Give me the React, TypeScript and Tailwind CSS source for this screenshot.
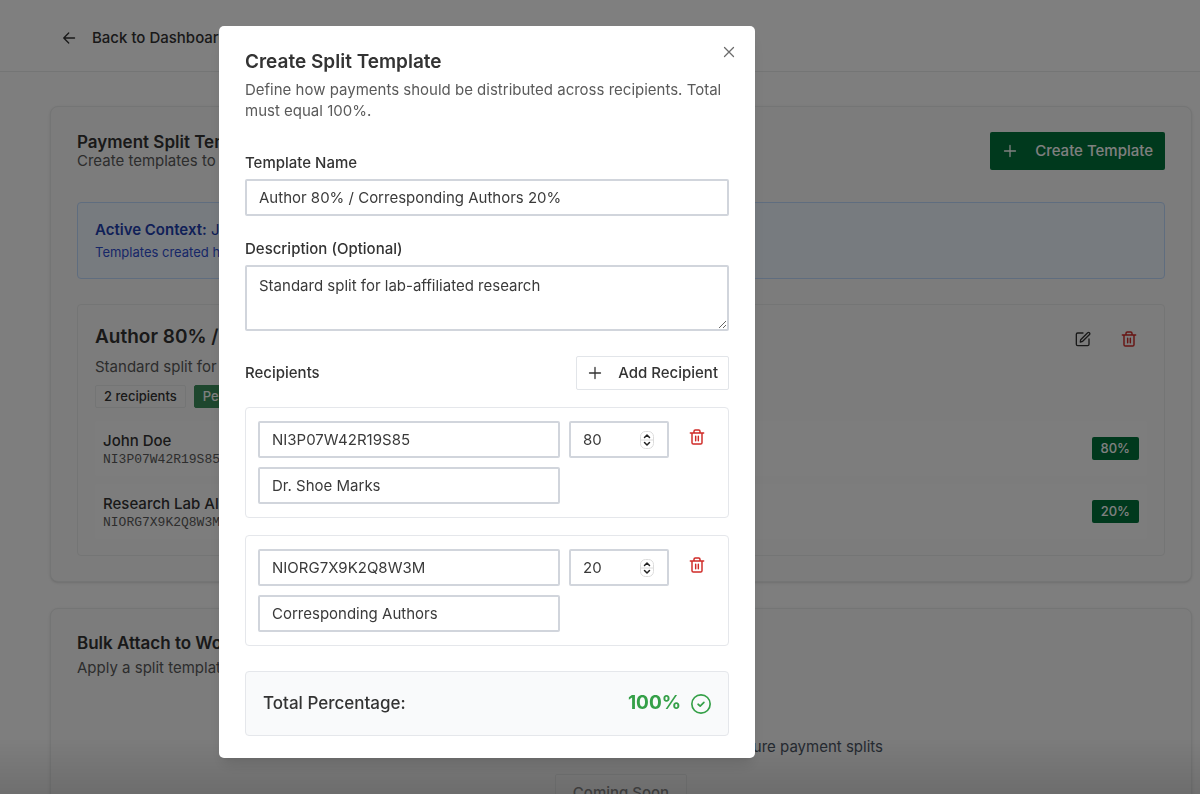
import { useState } from 'react';

interface Recipient {
  id: string;
  name: string;
  percentage: number;
}

interface IconProps {
  className?: string;
}

const inputClass =
  'w-full h-[37px] rounded-xs border-2 border-[#d1d5dc] bg-white px-3 text-[15px] text-[#3a3a3a] outline-none';

function PlusIcon({ className }: IconProps) {
  return (
    <svg viewBox="0 0 16 16" fill="none" stroke="currentColor" strokeWidth="1.3" strokeLinecap="round" className={className}>
      <path d="M2.500 8h11M8 2.500v11" />
    </svg>
  );
}

function ArrowLeftIcon({ className }: IconProps) {
  return (
    <svg viewBox="0 0 24 24" fill="none" stroke="currentColor" strokeWidth="2.300" strokeLinecap="round" strokeLinejoin="round" className={className}>
      <path d="M21.500 12H3M11.500 3.500 3 12l8.500 8.500" />
    </svg>
  );
}

function TrashIcon({ className }: IconProps) {
  return (
    <svg viewBox="0 0 24 24" fill="none" stroke="currentColor" strokeWidth="2.200" strokeLinecap="round" strokeLinejoin="round" className={className}>
      <path d="M2 6h20M4.500 6v14.500a2 2 0 0 0 2 2h11a2 2 0 0 0 2-2V6M7.500 6V3.500a2 2 0 0 1 2-2h5a2 2 0 0 1 2 2V6M10 11v6.500M14 11v6.500" />
    </svg>
  );
}

function EditIcon({ className }: IconProps) {
  return (
    <svg viewBox="0 0 24 24" fill="none" stroke="currentColor" strokeWidth="2" strokeLinecap="round" strokeLinejoin="round" className={className}>
      <path d="M12 3H4a2 2 0 0 0-2 2v15a2 2 0 0 0 2 2h15a2 2 0 0 0 2-2v-8" />
      <path d="M8.500 13 19 2.500a2 2 0 0 1 2.800 2.800L11.500 15.500 8 16.500z" />
    </svg>
  );
}

function CheckCircleIcon({ className }: IconProps) {
  return (
    <svg viewBox="0 0 24 24" fill="none" stroke="currentColor" strokeWidth="2" strokeLinecap="round" strokeLinejoin="round" className={className}>
      <circle cx="12" cy="12" r="11" />
      <path d="m8.500 12.300 2.500 2.200 4.500-4.500" />
    </svg>
  );
}

function CloseIcon({ className }: IconProps) {
  return (
    <svg viewBox="0 0 24 24" fill="none" stroke="currentColor" strokeWidth="2.500" strokeLinecap="round" className={className}>
      <path d="M3 3l18 18M21 3 3 21" />
    </svg>
  );
}

function StepperIcon({ className }: IconProps) {
  return (
    <svg viewBox="0 0 14 18" fill="none" className={className}>
      <rect x="0.500" y="0.500" width="13" height="17" rx="5" fill="#fff" stroke="#dcdcdc" />
      <path d="M1 9h12" stroke="#dcdcdc" />
      <path d="m4.500 6.500 2.500-2.500 2.500 2.500M4.500 11.500 7 14l2.500-2.500" stroke="#222" strokeWidth="1.500" strokeLinecap="round" strokeLinejoin="round" />
    </svg>
  );
}

function SavedRecipient({ name, id, percentage }: Recipient) {
  return (
    <div className="flex items-center justify-between rounded-sm bg-[#fbfbfb] px-2 h-[55px]">
      <div className="pt-1">
        <div className="text-[15px] leading-[18px] font-medium">{name}</div>
        <div className="font-['Liberation_Mono',monospace] text-[13px] leading-5 text-[#5a5a5a]">{id}</div>
      </div>
      <span className="rounded-xs bg-[#00723a] px-[9px] text-[13px] leading-[23px] font-medium text-white">{percentage}%</span>
    </div>
  );
}

function RecipientEditor({ recipient, index, onChange, onRemove }: {
  recipient: Recipient;
  index: number;
  onChange: (next: Recipient) => void;
  onRemove: () => void;
}) {
  return (
    <div className="flex items-start gap-[9px] rounded-sm border border-[#e5e7eb] p-[13px] pl-3">
      <div className="flex flex-1 flex-col gap-[9px]">
        <input aria-label={`Recipient ${index + 1} ID`} value={recipient.id} className={inputClass}
          onChange={(e) => onChange({ ...recipient, id: e.target.value })} />
        <input aria-label={`Recipient ${index + 1} name`} value={recipient.name} className={inputClass}
          onChange={(e) => onChange({ ...recipient, name: e.target.value })} />
      </div>
      <div className="relative w-[100px]">
        <input type="number" aria-label={`Recipient ${index + 1} percentage`} value={recipient.percentage}
          className={`${inputClass} [appearance:textfield] [&::-webkit-inner-spin-button]:appearance-none`}
          onChange={(e) => onChange({ ...recipient, percentage: Number(e.target.value) })} />
        <StepperIcon className="pointer-events-none absolute right-[15px] top-[10px] w-[14px] h-[18px]" />
      </div>
      <button type="button" aria-label="Remove recipient" onClick={onRemove}
        className="flex h-8 w-[37px] items-center justify-center text-[#cf2a27]">
        <TrashIcon className="size-4" />
      </button>
    </div>
  );
}

function CreateTemplateDialog({ onClose }: { onClose: () => void }) {
  const [name, setName] = useState('Author 80% / Corresponding Authors 20%');
  const [description, setDescription] = useState('Standard split for lab-affiliated research');
  const [recipients, setRecipients] = useState<Recipient[]>([
    { id: 'NI3P07W42R19S85', name: 'Dr. Shoe Marks', percentage: 80 },
    { id: 'NIORG7X9K2Q8W3M', name: 'Corresponding Authors', percentage: 20 },
  ]);

  const total = recipients.reduce((sum, r) => sum + r.percentage, 0);

  return (
    <div className="fixed inset-0 z-50 flex items-center justify-center bg-black/50 pr-[226px] pb-[10px]">
      {/* Shade along the bottom edge */}
      <div className="absolute inset-x-0 bottom-0 h-14 bg-linear-to-t from-black/12 to-transparent" />

      <div role="dialog" aria-labelledby="dialog-title"
        className="relative w-[536px] rounded-[5px] bg-white px-[26px] pt-[25px] pb-[22px] text-[#333] shadow-lg">
        <button type="button" aria-label="Close" onClick={onClose} className="absolute right-5 top-5 text-[#6b6b6b]">
          <CloseIcon className="size-3" />
        </button>

        <h2 id="dialog-title" className="text-[19px] leading-[22px] font-semibold">Create Split Template</h2>
        <p className="mt-[6px] text-[15px] leading-[21px] text-[#5a5a5a]">
          Define how payments should be distributed across recipients. Total must equal 100%.
        </p>

        <div className="mt-[31px]">
          <label htmlFor="name" className="block text-[15px] leading-[22px] font-medium">Template Name</label>
          <input id="name" value={name} onChange={(e) => setName(e.target.value)} className={`${inputClass} mt-[5px]`} />
        </div>

        <div className="mt-[22px]">
          <label htmlFor="description" className="block text-[15px] leading-[22px] font-medium">Description (Optional)</label>
          <textarea id="description" value={description} onChange={(e) => setDescription(e.target.value)}
            className="mt-[5px] block h-[66px] w-full resize-y rounded-xs border-2 border-[#d1d5dc] px-3 py-2 text-[15px] leading-[21px] text-[#3a3a3a] outline-none" />
        </div>

        {/* Recipients */}
        <div className="mt-[25px] flex items-center justify-between">
          <h3 className="text-[15px] font-medium">Recipients</h3>
          <button type="button" onClick={() => setRecipients([...recipients, { id: '', name: '', percentage: 0 }])}
            className="flex h-[34px] items-center gap-[15px] rounded-xs border border-[#e2e5e9] px-[10px] text-[15px] font-medium">
            <PlusIcon className="size-4" />
            Add Recipient
          </button>
        </div>
        <div className="mt-[17px] space-y-[17px]">
          {recipients.map((r, i) => (
            <RecipientEditor key={i} recipient={r} index={i}
              onChange={(next) => setRecipients(recipients.map((old, j) => (j === i ? next : old)))}
              onRemove={() => setRecipients(recipients.filter((_, j) => j !== i))} />
          ))}
        </div>

        {/* Total */}
        <div className="mt-[25px] flex h-[65px] items-center justify-between rounded-sm border border-[#e5e7eb] bg-[#f9fafb] px-[17px]">
          <span className="text-[17px] font-medium">Total Percentage:</span>
          <span className={`flex items-center gap-[10px] text-[19px] font-bold ${total === 100 ? 'text-[#35a048]' : 'text-[#cf2a27]'}`}>
            {total}%
            {total === 100 && <CheckCircleIcon className="size-5" />}
          </span>
        </div>
      </div>
    </div>
  );
}

export default function App() {
  const [open, setOpen] = useState(true);

  return (
    <div className="h-screen overflow-hidden bg-[#fcfcfc] font-['Inter',sans-serif] text-[#333]">
      <header className="flex h-[72px] items-center border-b border-[#e8eaea] bg-white px-[62px] pt-[5px]">
        <a href="#dashboard" className="flex items-center gap-4 text-[15px] font-medium">
          <ArrowLeftIcon className="size-[14px]" />
          Back to Dashboard
        </a>
      </header>

      <main className="space-y-[26px] pt-[34px] pl-[50px] pr-2">
        <section className="rounded-lg border border-[#e8eaea] bg-[#f9f9f9] px-[26px] pt-[25px] pb-[25px] shadow-sm">
          <div className="flex items-center justify-between">
            <div>
              <h2 className="text-[17px] leading-[18px] font-semibold">Payment Split Templates</h2>
              <p className="text-[15px] leading-[19px] text-[#5a5a5a]">Create templates to automatically split payments</p>
            </div>
            <button type="button" onClick={() => setOpen(true)}
              className="flex h-[38px] items-center gap-[17px] rounded-xs bg-[#00723a] px-3 text-[15px] font-medium text-white">
              <PlusIcon className="size-4" />
              Create Template
            </button>
          </div>

          <div className="mt-8 h-[77px] rounded-sm border border-[#bfdbfe] bg-[#eff6ff] px-[17px] pt-[15px]">
            <p className="text-[15px] leading-[23px] text-[#1e40af]"><strong className="font-semibold">Active Context:</strong> John Doe</p>
            <p className="text-[13px] leading-[22px] text-[#2f4fd0]">Templates created here belong to this context</p>
          </div>

          <article className="mt-[25px] rounded-sm border border-[#e8eaea] px-[17px] pt-[18px] pb-4">
            <div className="flex items-start justify-between">
              <div>
                <h3 className="text-[19px] leading-7 font-semibold">Author 80% / Lab 20%</h3>
                <p className="mt-[5px] text-[15px] leading-[22px] text-[#5a5a5a]">Standard split for lab-affiliated research</p>
                <div className="mt-[7px] flex gap-2 text-[13px] leading-[21px] font-medium">
                  <span className="rounded-xs border border-[#e8eaea] px-2">2 recipients</span>
                  <span className="rounded-xs border border-[#3c8f5c] bg-[#3c8f5c] px-2 text-white">Personal</span>
                </div>
              </div>
              <div className="flex gap-[30px] pt-2 pr-[10px]">
                <button type="button" aria-label="Edit template"><EditIcon className="size-4" /></button>
                <button type="button" aria-label="Delete template" className="text-[#cf2a27]"><TrashIcon className="size-4" /></button>
              </div>
            </div>
            <div className="mt-[13px] space-y-2">
              <SavedRecipient name="John Doe" id="NI3P07W42R19S85" percentage={80} />
              <SavedRecipient name="Research Lab Alpha" id="NIORG7X9K2Q8W3M" percentage={20} />
            </div>
          </article>
        </section>

        <section className="rounded-lg border border-[#e8eaea] bg-[#f9f9f9] px-[26px] pt-[25px] pb-[26px] shadow-sm">
          <h2 className="text-[17px] leading-[18px] font-semibold">Bulk Attach to Works</h2>
          <p className="mt-[5px] text-[15px] leading-[22px] text-[#5a5a5a]">Apply a split template to multiple works at once</p>
          <div className="mt-[57px] flex flex-col items-center">
            <p className="text-[15px] leading-[22px] text-[#4b5563]">Select multiple works and attach one template to configure payment splits</p>
            <button type="button" disabled className="mt-4 h-[38px] rounded-xs border border-[#e8eaea] px-[17px] text-[15px] font-medium text-[#8a8a8a]">
              Coming Soon
            </button>
          </div>
        </section>
      </main>

      {open && <CreateTemplateDialog onClose={() => setOpen(false)} />}
    </div>
  );
}
